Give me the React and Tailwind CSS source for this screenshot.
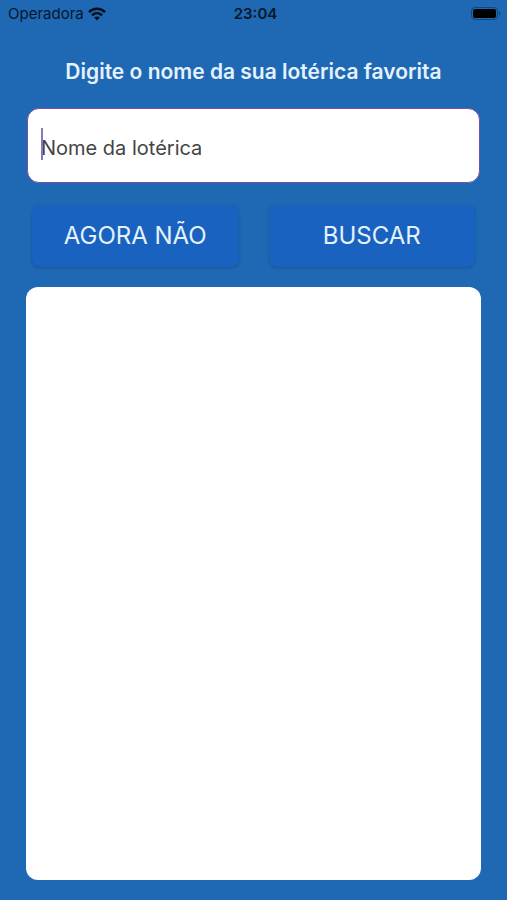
import { useState } from 'react';

const btnCls = 'flex-1 h-[62px] bg-[#1962bf] text-[#e3f2fd] text-2xl rounded-lg shadow-[0_1px_3px_rgba(0,0,0,0.2)]';

function StatusBar() {
    return (
        <header className="grid grid-cols-3 items-center h-7 pl-2 pr-1 text-[#06182c] text-[15px]">
            <div className="flex items-center gap-1">
                <span>Operadora</span>
                <svg viewBox="0 0 18 14" className="w-[18px] h-3.5" aria-hidden="true">
                    <g fill="none" stroke="#04101d" strokeWidth="2.6">
                        <path d="M1 5.1C5.5 0.7 12.5 0.7 17 5.1" />
                        <path d="M4 8.4C6.9 5.6 11.1 5.6 14 8.4" />
                    </g>
                    <path d="M9 13.4L6.2 10.6C7.8 9.2 10.2 9.2 11.8 10.6Z" fill="#04101d" />
                </svg>
            </div>
            <span className="text-center font-semibold">23:04</span>
            <svg viewBox="0 0 32 16" className="w-8 h-4 justify-self-end" aria-hidden="true">
                <rect x="0.5" y="1.5" width="26" height="12" rx="3.5" fill="none" stroke="#134779" />
                <rect x="2" y="3" width="23" height="9" rx="2" fill="#000000" />
                <path d="M28 5.5C30 6 30 9 28 9.5Z" fill="#134779" />
            </svg>
        </header>
    );
}

export default function App() {
    const [nome, setNome] = useState('');

    return (
        <div className="min-h-screen flex flex-col bg-[#1f68b3] font-['Inter','Liberation_Sans',sans-serif]">
            <StatusBar />

            <main className="flex-1 flex flex-col px-[26px] pt-7 pb-5">
                <form onSubmit={e => e.preventDefault()}>
                    <label htmlFor="nome" className="block text-center text-[#e3f2fd] text-[21px] leading-8 font-semibold">
                        Digite o nome da sua lotérica favorita
                    </label>

                    <div className="relative mt-5 mx-px">
                        <input id="nome" type="text" value={nome}
                            onChange={e => setNome(e.target.value)}
                            placeholder="Nome da lotérica"
                            className="block w-full h-[75px] bg-white border border-[#7b4fa6] rounded-xl pt-1 px-[13px] text-xl text-[#444444] placeholder:text-[#444444] outline-none caret-transparent"
                        />
                        {!nome && <span className="absolute left-3.5 top-5 w-0.5 h-8 bg-[#8578bd]" />}
                    </div>

                    <div className="flex gap-[30px] mt-[22px] mx-1.5">
                        <button type="button" className={btnCls}>AGORA NÃO</button>
                        <button type="submit" className={btnCls}>BUSCAR</button>
                    </div>
                </form>

                <section className="flex-1 mt-5 bg-white rounded-xl" />
            </main>
        </div>
    );
}
